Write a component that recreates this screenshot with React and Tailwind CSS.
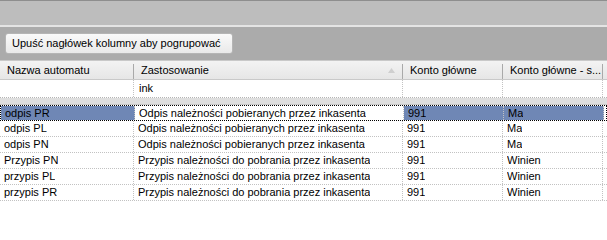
const cols = [
  { key: "name", width: "w-[134px]" },
  { key: "use", width: "w-[269px]" },
  { key: "acct", width: "w-[100px]" },
  { key: "side", width: "w-[100px]" },
];

const rows = [
  { name: "odpis PR", use: "Odpis należności pobieranych przez inkasenta", acct: "991", side: "Ma" },
  { name: "odpis PL", use: "Odpis należności pobieranych przez inkasenta", acct: "991", side: "Ma" },
  { name: "odpis PN", use: "Odpis należności pobieranych przez inkasenta", acct: "991", side: "Ma" },
  { name: "Przypis PN", use: "Przypis należności do pobrania przez inkasenta", acct: "991", side: "Winien" },
  { name: "przypis PL", use: "Przypis należności do pobrania przez inkasenta", acct: "991", side: "Winien" },
  { name: "przypis PR", use: "Przypis należności do pobrania przez inkasenta", acct: "991", side: "Winien" },
];

function HeaderCell({ width, children, arrow }) {
  return (
    <div className={`${width} relative flex h-full shrink-0 items-center pl-[7px] after:absolute after:right-0 after:top-[3px] after:h-[15px] after:w-px after:bg-[#a9a9a9]`}>
      <span className="whitespace-nowrap">{children}</span>
      {arrow && (
        <svg className="absolute right-[8px] top-[7px]" width="7" height="5" viewBox="0 0 7 5">
          <path d="M3.5 0 L7 5 L0 5 Z" fill="#cfcfcf" />
        </svg>
      )}
    </div>
  );
}

export default function App() {
  return (
    <div className="h-[209px] w-[607px] overflow-hidden bg-white text-[11px] leading-none text-black" style={{ fontFamily: '"Liberation Sans", Arial, sans-serif' }}>
      <div className="h-[25px] border-t border-[#8e8e8e] bg-[#bdbdbd]" />
      <div className="h-[2px] bg-[#e4e4e4]" />
      <div className="flex h-[33px] items-start bg-[#ababab] pl-[5px] pt-[6px]">
        <button className="flex h-[21px] w-[228px] items-center rounded-[3px] border border-[#b5b5b5] bg-gradient-to-b from-[#fafafa] to-[#e9e9e9] pl-[6px] text-[11px] text-black">
          Upuść nagłówek kolumny aby pogrupować
        </button>
      </div>

      <div className="flex h-[20px] border-y border-[#c9c9c9] bg-gradient-to-b from-[#f3f3f3] to-[#e6e6e6]">
        <HeaderCell width={cols[0].width}>Nazwa automatu</HeaderCell>
        <HeaderCell width={cols[1].width} arrow>Zastosowanie</HeaderCell>
        <HeaderCell width={cols[2].width}>Konto główne</HeaderCell>
        <HeaderCell width={cols[3].width}>Konto główne - s...</HeaderCell>
        <div className="flex-1" />
      </div>

      <div className="flex h-[18px] border-b border-dotted border-[#b5b5b5]">
        {cols.map((c, i) => (
          <div key={c.key} className={`${c.width} flex shrink-0 items-center border-r border-dotted border-[#c2c2c2] pl-[5px]`}>
            {i === 1 ? "ink" : ""}
          </div>
        ))}
        <div className="flex-1" />
      </div>

      <div className="h-[7px] border-b border-[#c8c8c8] bg-[#dedede]" />

      {rows.map((r, idx) => {
        const sel = idx === 0;
        return (
          <div key={idx} className={`flex h-[16px] ${sel ? "border border-dotted border-black" : "border-b border-dotted border-[#c2c2c2]"}`}>
            {cols.map((c) => (
              <div
                key={c.key}
                className={`${c.width} flex shrink-0 items-center border-r border-dotted border-[#c2c2c2] pl-[4px] ${sel && c.key !== "use" ? "bg-[#6f87b5]" : ""}`}
              >
                <span className="truncate">{r[c.key]}</span>
              </div>
            ))}
            <div className="flex-1" />
          </div>
        );
      })}
    </div>
  );
}
